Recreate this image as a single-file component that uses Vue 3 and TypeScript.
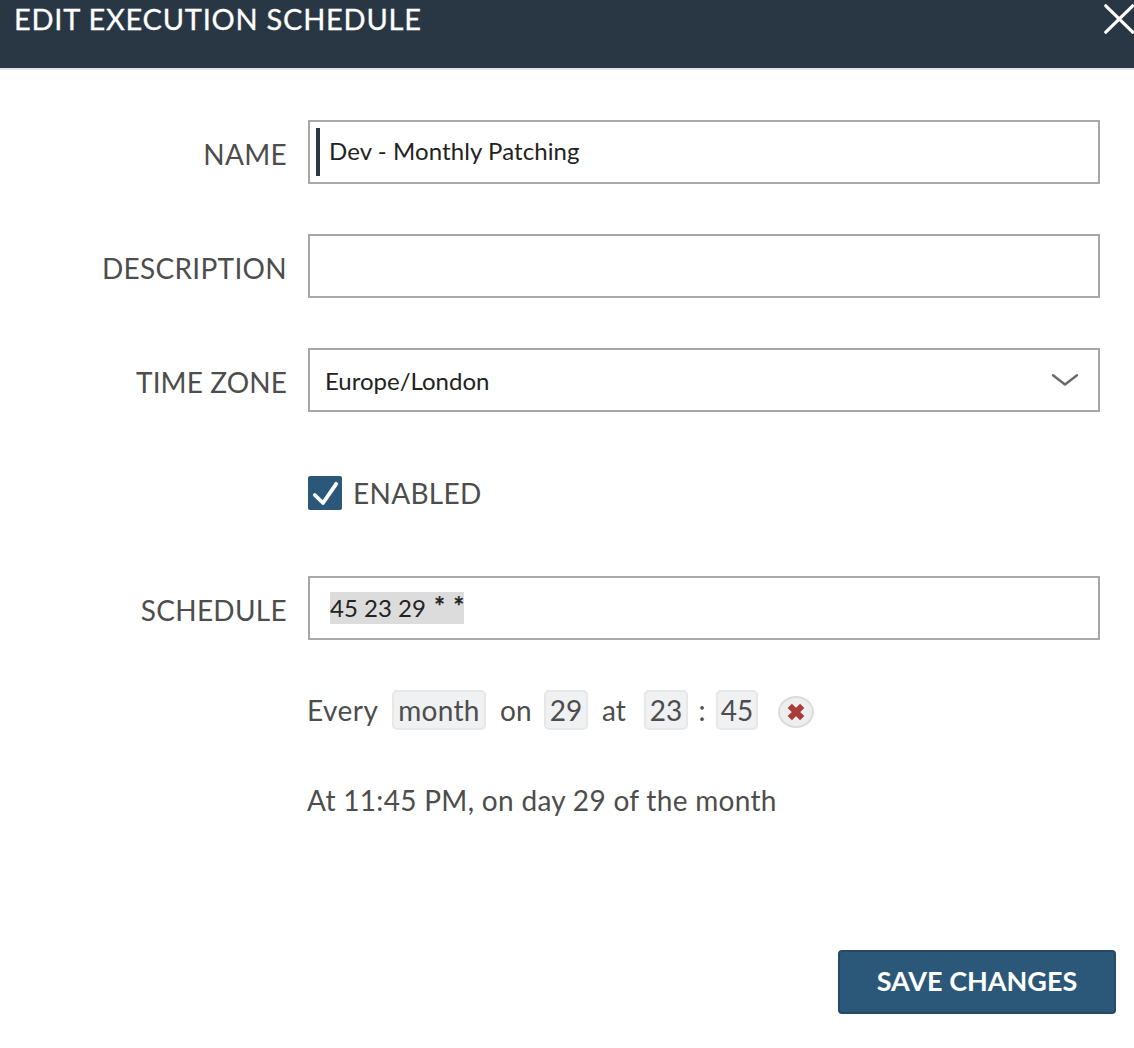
<script setup lang="ts">
import { ref } from 'vue'

const title = 'EDIT EXECUTION SCHEDULE'
const name = ref('Dev - Monthly Patching')
const timeZone = ref('Europe/London')
const cronTime = ref('45 23 29')
const cronWildcards = ref(' * *')
const enabled = ref(true)
const summary = 'At 11:45 PM, on day 29 of the month'
</script>

<template>
  <div class="dialog">
    <header class="header">
      <h1 class="title">{{ title }}</h1>
      <svg class="close" width="30" height="32" viewBox="0 0 30 32">
        <path d="M1.8 5.8 28.7 32.2M28.7 5.8 1.8 32.2" />
      </svg>
    </header>

    <main class="form">
      <div class="row">
        <span class="label l-name">NAME</span>
        <div class="field required"><i class="bar"></i><span class="value v-name">{{ name }}</span></div>
      </div>
      <div class="row">
        <span class="label l-desc">DESCRIPTION</span>
        <div class="field"></div>
      </div>
      <div class="row">
        <span class="label l-zone">TIME ZONE</span>
        <div class="field select">
          <span class="value v-zone">{{ timeZone }}</span>
          <svg width="28" height="14" viewBox="0 0 28 14"><path d="M2 2.3 14 11.5 26 2.3" /></svg>
        </div>
      </div>
      <div class="row check-row">
        <span class="box">
          <svg v-if="enabled" width="34" height="34" viewBox="0 0 34 34"><path d="M6.8 19 15 27 28.2 7.8" /></svg>
        </span>
        <span class="label l-enabled">ENABLED</span>
      </div>
      <div class="row">
        <span class="label l-sched">SCHEDULE</span>
        <div class="field">
          <span class="selection"><span class="value v-cron">{{ cronTime }}<span class="stars">{{ cronWildcards }}</span></span></span>
        </div>
      </div>

      <div class="cron">
        <span class="w-every">Every</span>
        <span class="chip c-month">month</span>
        <span class="w-on">on</span>
        <span class="chip c-day">29</span>
        <span class="w-at">at</span>
        <span class="chip c-hour">23</span>
        <span class="w-colon">:</span>
        <span class="chip c-min">45</span>
        <span class="clear">
          <svg width="18" height="18" viewBox="0 0 18 18"><path d="M2.8 2.8 15.2 15.2M15.2 2.8 2.8 15.2" /></svg>
        </span>
      </div>
      <p class="summary">{{ summary }}</p>
    </main>

    <footer class="footer">
      <button class="save"><span>SAVE CHANGES</span></button>
    </footer>
  </div>
</template>

<style>
body {
  background: #fff;
}
</style>

<style scoped>
.dialog {
  box-sizing: border-box;
  width: 1134px;
  height: 1048px;
  overflow: hidden;
  display: flex;
  flex-direction: column;
  background: #fff;
  color: #4d4d4d;
  font-family: Lato, "Noto Sans", sans-serif;
  font-size: 28px;
  white-space: nowrap;
}
.header {
  box-sizing: border-box;
  height: 70px;
  flex: none;
  display: flex;
  justify-content: space-between;
  align-items: flex-start;
  background: #293745;
  border-bottom: 2px solid #e4e6e6;
  color: #fff;
}
.title {
  margin: 0 0 0 14px;
  font-size: 29px;
  line-height: 38px;
  font-weight: 400;
  letter-spacing: 0.76px;
  -webkit-text-stroke: 0.3px #fff;
}
.close {
  overflow: visible;
}
.close path {
  fill: none;
  stroke: #fff;
  stroke-width: 3.2;
  stroke-linecap: round;
}
.form {
  padding-top: 50px;
}
.row {
  display: flex;
  height: 64px;
  margin-bottom: 50px;
}
.row > .label:first-child {
  width: 287px;
  margin-right: 21px;
  text-align: right;
}
.label {
  line-height: 68px;
  letter-spacing: 0.3px;
}
.l-zone {
  letter-spacing: 0.1px;
}
.field {
  box-sizing: border-box;
  width: 792px;
  height: 64px;
  border: 2px solid #a8a8a8;
  display: flex;
  align-items: center;
  padding: 0 20px;
}
.field.required {
  padding-left: 6px;
}
.bar {
  width: 4px;
  height: 48px;
  margin-right: 9px;
  background: #293745;
}
.field.select {
  padding: 0 19px 0 15px;
  justify-content: space-between;
}
.select svg path {
  fill: none;
  stroke: #6a6a6a;
  stroke-width: 2.4;
  stroke-linecap: round;
  stroke-linejoin: round;
}
.value {
  font-size: 24px;
  line-height: 32px;
  color: #222;
}
.v-name {
  padding-bottom: 2px;
  letter-spacing: 0.09px;
}
.v-zone {
  padding-top: 2px;
}
.selection {
  width: 134px;
  height: 32px;
  background: #dcdcdc;
}
.v-cron {
  display: block;
  line-height: 31px;
}
.stars {
  white-space: pre;
  word-spacing: 1.6px;
  -webkit-text-stroke: 0.5px #222;
  font-size: 26px;
  line-height: 1;
}
.check-row {
  height: 34px;
  margin: 64px 0 66px 308px;
  align-items: center;
}
.box {
  width: 34px;
  height: 34px;
  border-radius: 2px;
  background: #2b5878;
  margin-right: 11px;
}
.box svg {
  display: block;
}
.box path {
  fill: none;
  stroke: #fff;
  stroke-width: 3.8;
  stroke-linecap: round;
  stroke-linejoin: round;
}
.cron {
  display: flex;
  height: 40px;
  margin-left: 307px;
  line-height: 40px;
}
.w-every { width: 85px; letter-spacing: 0.5px; }
.w-on { width: 44px; margin-left: 14px; }
.w-at { width: 42px; margin-left: 14px; }
.w-colon { width: 28px; text-align: center; }
.chip {
  box-sizing: border-box;
  height: 40px;
  border: 2px solid #e7e7e7;
  border-radius: 5px;
  background: #f0f1f3;
  line-height: 36px;
  text-align: center;
}
.c-month { width: 94px; letter-spacing: 0.3px; }
.c-day, .c-hour { width: 44px; }
.c-min { width: 42px; }
.clear {
  box-sizing: border-box;
  width: 36px;
  height: 32px;
  margin: 6px 0 0 20px;
  border: 2px solid #dcdcdc;
  border-radius: 18px / 16px;
  background: #eee;
  display: flex;
  align-items: center;
  justify-content: center;
}
.clear path {
  stroke: #a83c3a;
  stroke-width: 6;
}
.summary {
  margin: 50px 0 0 307px;
  line-height: 40px;
  letter-spacing: 0.31px;
}
.footer {
  margin-top: auto;
  padding: 0 18px 34px 0;
  display: flex;
  justify-content: flex-end;
}
.save {
  box-sizing: border-box;
  width: 278px;
  height: 64px;
  padding: 0 0 2px;
  border: 2px solid #244a66;
  border-radius: 4px;
  background: #2b5878;
  color: #fff;
  font: 700 27px/58px Lato, "Noto Sans", sans-serif;
}
</style>
